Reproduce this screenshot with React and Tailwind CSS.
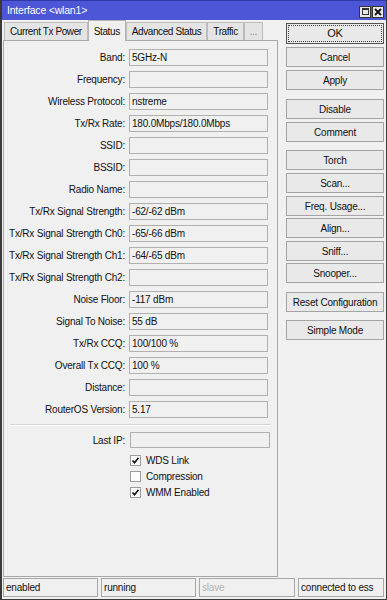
import React from 'react';

const rows = [
  ['Band:', '5GHz-N'],
  ['Frequency:', ''],
  ['Wireless Protocol:', 'nstreme'],
  ['Tx/Rx Rate:', '180.0Mbps/180.0Mbps'],
  ['SSID:', ''],
  ['BSSID:', ''],
  ['Radio Name:', ''],
  ['Tx/Rx Signal Strength:', '-62/-62 dBm'],
  ['Tx/Rx Signal Strength Ch0:', '-65/-66 dBm'],
  ['Tx/Rx Signal Strength Ch1:', '-64/-65 dBm'],
  ['Tx/Rx Signal Strength Ch2:', ''],
  ['Noise Floor:', '-117 dBm'],
  ['Signal To Noise:', '55 dB'],
  ['Tx/Rx CCQ:', '100/100 %'],
  ['Overall Tx CCQ:', '100 %'],
  ['Distance:', ''],
  ['RouterOS Version:', '5.17'],
];

// label, top margin (px)
const buttons = [
  ['Cancel', 'mt-[3px]'],
  ['Apply', 'mt-[3px]'],
  ['Disable', 'mt-[9px]'],
  ['Comment', 'mt-[3px]'],
  ['Torch', 'mt-[8px]'],
  ['Scan...', 'mt-[3px]'],
  ['Freq. Usage...', 'mt-[3px]'],
  ['Align...', 'mt-[2px]'],
  ['Sniff...', 'mt-[3px]'],
  ['Snooper...', 'mt-[2px]'],
  ['Reset Configuration', 'mt-[9px]'],
  ['Simple Mode', 'mt-[8px]'],
];

const Check = () => (
  <svg width="9" height="9" viewBox="0 0 9 9">
    <path d="M1.5 4.5 L3.5 6.8 L7.5 1.8" fill="none" stroke="#111" strokeWidth="1.6" />
  </svg>
);

const CheckRow = ({ label, checked }) => (
  <div className="flex items-center h-[16px] pl-[126px]">
    <div className="w-[11px] h-[11px] border border-[#9c9c9c] bg-[#fbfbfb] flex items-center justify-center">
      {checked && <Check />}
    </div>
    <span className="ml-[5px]">{label}</span>
  </div>
);

const Tab = ({ label, active, muted }) => (
  <div
    className={
      active
        ? 'h-[21px] px-[5px] flex items-center bg-[#f0f0f0] border border-b-0 border-[#b4b4b4] relative z-10 -mb-px'
        : 'h-[18px] mt-[2px] px-[5px] flex items-center bg-[#e4e4e4] border border-b-0 border-[#bcbcbc] ' + (muted ? 'text-[#8a8a8a]' : '')
    }
  >
    {label}
  </div>
);

export default function App() {
  return (
    <div
      className="w-[387px] h-[600px] bg-[#f0f0f0] text-[10px] text-[#111] border-l-2 border-r border-b border-[#3a3a3a] flex flex-col overflow-hidden"
      style={{ fontFamily: '"Liberation Sans", Arial, sans-serif' }}
    >
      {/* title bar */}
      <div className="h-[20px] bg-[#4c56d6] border-t border-[#2f39a8] flex items-center justify-between pl-[5px] pr-[2px] shrink-0">
        <span className="text-white text-[10.5px] tracking-[-0.2px]">Interface &lt;wlan1&gt;</span>
        <div className="flex gap-[1px] mt-[2px]">
          <div className="w-[12px] h-[12px] bg-[#e8e8e8] border border-[#333] flex items-center justify-center">
            <div className="w-[7px] h-[7px] border border-[#333] border-t-2" />
          </div>
          <div className="w-[12px] h-[12px] bg-[#e8e8e8] border border-[#333] flex items-center justify-center">
            <svg width="8" height="8" viewBox="0 0 8 8">
              <path d="M1 1 L7 7 M7 1 L1 7" stroke="#111" strokeWidth="1.8" />
            </svg>
          </div>
        </div>
      </div>

      <div className="flex flex-1">
        {/* left: tabs + panel */}
        <div className="ml-[1px] w-[275px] shrink-0 flex flex-col">
          <div className="h-[20px] flex items-end tracking-[-0.4px] pl-[1px]">
            <Tab label="Current Tx Power" />
            <Tab label="Status" active />
            <Tab label="Advanced Status" />
            <Tab label="Traffic" />
            <Tab label="..." muted />
          </div>
          <div className="h-[537px] border border-[#a8a8a8] bg-[#f0f0f0] pt-[5px] tracking-[-0.2px]">
            {rows.map(([label, value]) => (
              <div key={label} className="h-[22px] flex items-center">
                <div className="w-[121px] text-right">{label}</div>
                <div className="ml-[4px] w-[139px] h-[17px] border border-[#b0b0b0] bg-[#f0f0f0] px-[2px] flex items-center">
                  {value}
                </div>
              </div>
            ))}
            <div className="mt-[4px] mx-[6px] border-t border-[#d6d6d6] border-b border-b-white" />
            <div className="h-[22px] mt-[3px] flex items-center">
              <div className="w-[121px] text-right">Last IP:</div>
              <div className="ml-[5px] w-[140px] h-[16px] border border-[#b0b0b0] bg-[#f0f0f0]" />
            </div>
            <div className="mt-[1px]">
              <CheckRow label="WDS Link" checked />
              <CheckRow label="Compression" />
              <CheckRow label="WMM Enabled" checked />
            </div>
          </div>
        </div>

        {/* right: buttons */}
        <div className="ml-[8px] w-[98px] shrink-0 flex flex-col pt-[3px] tracking-[-0.2px]">
          <div className="h-[21px] border border-[#555] bg-[#e9e9e9] p-[1px]">
            <div className="h-full border border-dotted border-[#444] flex items-center justify-center text-[11px]">
              OK
            </div>
          </div>
          {buttons.map(([label, mt]) => (
            <div
              key={label}
              className={mt + ' h-[20px] border border-[#a4a4a4] bg-[#e9e9e9] flex items-center justify-center'}
            >
              {label}
            </div>
          ))}
        </div>
      </div>

      {/* status bar */}
      <div className="h-[19px] mb-[2px] grid grid-cols-[95px_95px_96px_86px] gap-x-[3px] pl-[1px] tracking-[-0.2px]">
        <div className="border border-[#a8a8a8] px-[2px] flex items-center">enabled</div>
        <div className="border border-[#a8a8a8] px-[2px] flex items-center">running</div>
        <div className="border border-[#a8a8a8] px-[2px] flex items-center text-[#b4b4b4]">slave</div>
        <div className="border border-[#a8a8a8] px-[2px] flex items-center">connected to ess</div>
      </div>
    </div>
  );
}
